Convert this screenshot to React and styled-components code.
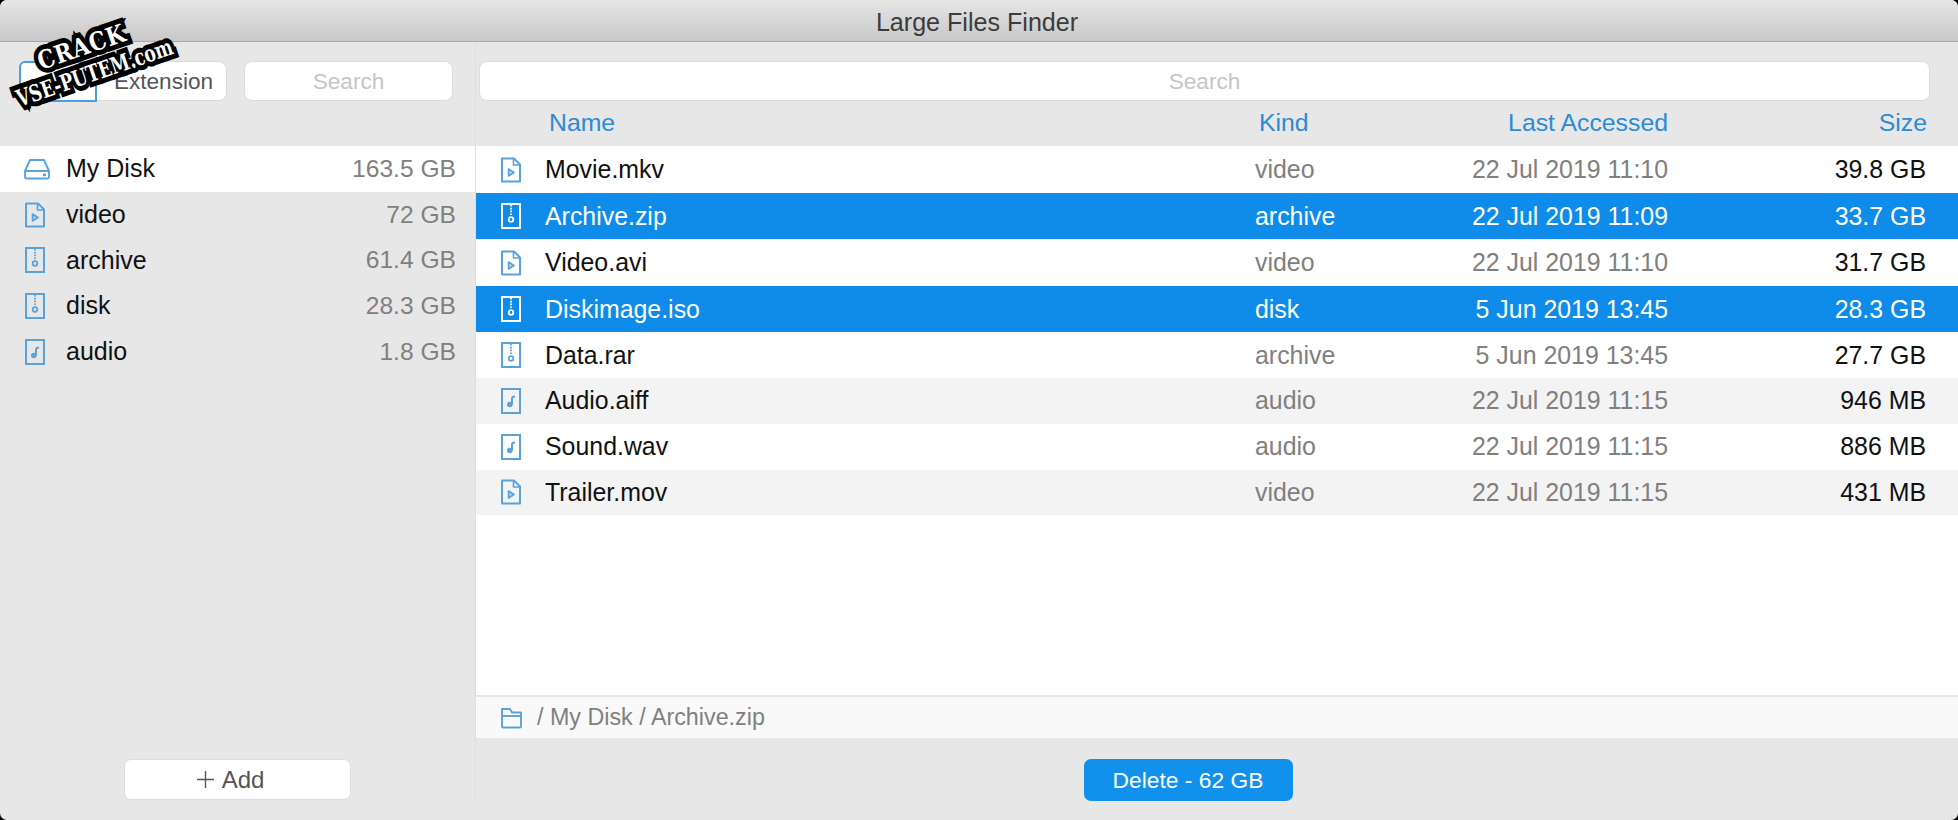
import React from "react";
import styled, { createGlobalStyle } from "styled-components";

const Global = createGlobalStyle`
  html, body { margin: 0; padding: 0; background: #000; }
  body { font-family: "Liberation Sans", Arial, sans-serif; }
  * { box-sizing: border-box; }
`;

const Win = styled.div`
  position: relative;
  width: 1958px;
  height: 820px;
  background: #e7e7e7;
  border-radius: 7px;
  overflow: hidden;
  display: flex;
  flex-direction: column;
`;
const TitleBar = styled.div`
  height: 42px;
  flex: none;
  background: linear-gradient(#e6e6e6, #c8c8c8);
  border-bottom: 1px solid #a9a9a9;
  color: #3c3c3c;
  font-size: 25.1px;
  display: flex;
  align-items: center;
  justify-content: center;
  padding: 3px 4px 0 0;
`;
const Body = styled.div`
  flex: 1;
  display: flex;
  min-height: 0;
`;
const Side = styled.aside`
  width: 476px;
  flex: none;
  border-right: 1px solid #dedede;
  display: flex;
  flex-direction: column;
  margin-bottom: 20px;
`;
const SideTop = styled.div`
  height: 104px;
  flex: none;
  padding: 19px 22px 0 19px;
  display: flex;
  align-items: flex-start;
`;
const Seg = styled.div`
  width: 78px;
  height: 41px;
  border: 2px solid #4a9fdc;
  border-radius: 6px 0 0 6px;
  background: #fff;
`;
const SegBtn = styled.div`
  width: 130px;
  height: 40px;
  background: #fff;
  border: 1px solid #dadada;
  border-left: none;
  border-radius: 0 8px 8px 0;
  color: #555;
  font-size: 22.6px;
  display: flex;
  align-items: center;
  justify-content: center;
  padding: 2px 0 0 4px;
`;
const SearchBox = styled.div`
  height: 40px;
  flex: ${(p) => (p.$wide ? 1 : "none")};
  width: ${(p) => (p.$wide ? "auto" : "209px")};
  margin-left: ${(p) => (p.$wide ? 0 : "17px")};
  background: #fff;
  border: 1px solid #dcdcdc;
  border-radius: 8px;
  color: #c6c6c6;
  font-size: 22.6px;
  display: flex;
  align-items: center;
  justify-content: center;
  padding-top: 2px;
`;
const SideRow = styled.div`
  height: 45.7px;
  flex: none;
  display: flex;
  align-items: center;
  padding: 0 19px 0 24px;
  background: ${(p) => (p.$active ? "#fff" : "transparent")};
`;
const SideIcon = styled.div`
  width: 42px;
  flex: none;
  display: flex;
  align-items: center;
`;
const SideName = styled.span`
  flex: 1;
  color: #111;
  font-size: 25px;
`;
const SideSize = styled.span`
  color: #808080;
  font-size: 24.6px;
`;
const SideFoot = styled.div`
  margin-top: auto;
  display: flex;
  padding-left: 124px;
`;
const AddBtn = styled.div`
  width: 227px;
  height: 41px;
  background: #fff;
  border: 1px solid #dcdcdc;
  border-radius: 7px;
  color: #555;
  font-size: 24px;
  display: flex;
  align-items: center;
  justify-content: center;
  gap: 8px;
  padding-right: 14px;
`;
const Main = styled.main`
  flex: 1;
  min-width: 0;
  display: flex;
  flex-direction: column;
`;
const MainTop = styled.div`
  flex: none;
  height: 60px;
  padding: 19px 28px 0 3px;
  display: flex;
  align-items: flex-start;
`;
const Grid = styled.div`
  display: grid;
  grid-template-columns: 45px 710px 160px 253px 1fr;
  padding: 0 31px 0 24px;
  align-items: center;
`;
const Head = styled(Grid)`
  height: 44px;
  flex: none;
  color: #2b8bd6;
  font-size: 24.8px;
  padding-bottom: 3px;
`;
const HeadCell = styled.span`
  text-align: ${(p) => (p.$right ? "right" : "left")};
  padding-left: ${(p) => (p.$right ? 0 : "4px")};
`;
const List = styled.div`
  flex: 1;
  background: #fff;
  min-height: 0;
`;
const Row = styled(Grid)`
  height: ${(p) => p.$h}px;
  font-size: 24.9px;
  background: ${(p) => (p.$sel ? "#0f8be9" : p.$alt ? "#f3f3f3" : "#fff")};
  color: ${(p) => (p.$sel ? "#fff" : "#111")};
`;
const RowIcon = styled.span`
  display: flex;
  align-items: center;
`;
const Muted = styled.span`
  color: ${(p) => (p.$sel ? "#fff" : "#808080")};
  text-align: ${(p) => (p.$right ? "right" : "left")};
`;
const Size = styled.span`
  text-align: right;
  padding-right: 1px;
`;
const PathBar = styled.div`
  height: 43px;
  flex: none;
  background: #f9f9f9;
  border-top: 2px solid #e6e6e6;
  display: flex;
  align-items: center;
  padding-left: 25px;
  gap: 15px;
  color: #808080;
  font-size: 23.3px;
`;
const Foot = styled.div`
  height: 82px;
  flex: none;
  display: flex;
  justify-content: flex-start;
  padding: 21px 0 0 607.5px;
`;
const DelBtn = styled.div`
  width: 209px;
  height: 42px;
  background: #1190ec;
  border-radius: 7px;
  color: #fff;
  font-size: 22.8px;
  display: flex;
  align-items: center;
  justify-content: center;
`;
const Stamp = styled.div`
  position: absolute;
  left: -3px;
  top: 20px;
  width: 190px;
  height: 90px;
  transform: rotate(-19deg);
  font-family: "DejaVu Serif", serif;
  font-weight: 700;
  color: #fff;
  line-height: 1;
  text-align: center;
  -webkit-text-stroke: 10px #000;
  paint-order: stroke fill;
`;
const StampTop = styled.div`
  font-size: 25px;
  margin: 12px 8px 4px 0;
  letter-spacing: 1px;
  transform: scaleX(0.86);
`;
const StampBottom = styled.div`
  font-size: 23px;
  white-space: nowrap;
  transform: scaleX(0.74);
  transform-origin: 50% 50%;
  margin-left: -50px;
  margin-right: -50px;
`;

const FileShape = ({ c, children }) => (
  <svg width="22" height="28" viewBox="0 0 22 28" fill="none" stroke={c} strokeWidth="2" strokeLinejoin="round">
    <path d="M2 2.5h12l6 6v17H2z" />
    <path d="M13.5 2.5v6.5H20" strokeWidth="1.6" />
    {children}
  </svg>
);
const Video = ({ c }) => (
  <FileShape c={c}>
    <path d="M8.5 13l5.5 3.5-5.5 3.5z" fill={c} fillOpacity=".45" strokeWidth="1.6" />
  </FileShape>
);
const Zip = ({ c }) => (
  <svg width="22" height="28" viewBox="0 0 22 28" fill="none" stroke={c} strokeWidth="2">
    <rect x="2" y="2" width="18" height="24" />
    <path d="M11 3v11" strokeDasharray="1.6 1.2" strokeWidth="1.8" />
    <circle cx="11" cy="17.5" r="2.3" strokeWidth="1.8" />
  </svg>
);
const Audio = ({ c }) => (
  <svg width="22" height="28" viewBox="0 0 22 28" fill="none" stroke={c} strokeWidth="2">
    <rect x="2" y="2" width="18" height="24" />
    <path d="M12 17.5v-6c0-1.4 1-1.9 3-1.9" strokeWidth="2" />
    <circle cx="9.8" cy="17.5" r="2.8" fill={c} stroke="none" />
  </svg>
);
const Disk = ({ c }) => (
  <svg width="26" height="22" viewBox="0 0 26 22" fill="none" stroke={c} strokeWidth="1.9" strokeLinejoin="round">
    <path d="M6 2h14l5 11H1z" />
    <rect x="1" y="13" width="24" height="7.5" rx="1.5" />
    <circle cx="20.5" cy="16.8" r=".7" fill={c} />
  </svg>
);
const Folder = ({ c }) => (
  <svg width="21" height="22" viewBox="0 0 21 22" fill="none" stroke={c} strokeWidth="1.9" strokeLinejoin="round">
    <path d="M1 19.5V2h8l2 3.5h9v14a1 1 0 0 1-1 1H2a1 1 0 0 1-1-1z" />
    <path d="M1 9h19" />
  </svg>
);

const BLUE = "#5aa3da";
const icons = { video: Video, archive: Zip, disk: Zip, audio: Audio };

const sideRows = [
  ["video", "72 GB"],
  ["archive", "61.4 GB"],
  ["disk", "28.3 GB"],
  ["audio", "1.8 GB"],
];
const files = [
  ["Movie.mkv", "video", "22 Jul 2019 11:10", "39.8 GB", "", 47],
  ["Archive.zip", "archive", "22 Jul 2019 11:09", "33.7 GB", "sel", 46],
  ["Video.avi", "video", "22 Jul 2019 11:10", "31.7 GB", "", 47],
  ["Diskimage.iso", "disk", "5 Jun 2019 13:45", "28.3 GB", "sel", 46],
  ["Data.rar", "archive", "5 Jun 2019 13:45", "27.7 GB", "", 46],
  ["Audio.aiff", "audio", "22 Jul 2019 11:15", "946 MB", "alt", 45.5],
  ["Sound.wav", "audio", "22 Jul 2019 11:15", "886 MB", "", 46],
  ["Trailer.mov", "video", "22 Jul 2019 11:15", "431 MB", "alt", 45.5],
];

export default function App() {
  return (
    <Win>
      <Global />
      <TitleBar>Large Files Finder</TitleBar>
      <Body>
        <Side>
          <SideTop>
            <Seg />
            <SegBtn>Extension</SegBtn>
            <SearchBox>Search</SearchBox>
          </SideTop>
          <SideRow $active>
            <SideIcon><Disk c={BLUE} /></SideIcon>
            <SideName>My Disk</SideName>
            <SideSize>163.5 GB</SideSize>
          </SideRow>
          {sideRows.map(([n, s]) => {
            const I = icons[n];
            return (
              <SideRow key={n}>
                <SideIcon><I c={BLUE} /></SideIcon>
                <SideName>{n}</SideName>
                <SideSize>{s}</SideSize>
              </SideRow>
            );
          })}
          <SideFoot>
            <AddBtn>
              <svg width="17" height="17" viewBox="0 0 17 17" stroke="#555" strokeWidth="1.4"><path d="M8.5 0v17M0 8.5h17" /></svg>
              Add
            </AddBtn>
          </SideFoot>
        </Side>
        <Main>
          <MainTop><SearchBox $wide>Search</SearchBox></MainTop>
          <Head>
            <span />
            <HeadCell>Name</HeadCell>
            <HeadCell>Kind</HeadCell>
            <HeadCell $right>Last Accessed</HeadCell>
            <HeadCell $right>Size</HeadCell>
          </Head>
          <List>
            {files.map(([n, k, d, s, f, h]) => {
              const I = icons[k];
              const sel = f === "sel";
              return (
                <Row key={n} $h={h} $sel={sel} $alt={f === "alt"}>
                  <RowIcon><I c={sel ? "#fff" : BLUE} /></RowIcon>
                  <span>{n}</span>
                  <Muted $sel={sel}>{k}</Muted>
                  <Muted $sel={sel} $right>{d}</Muted>
                  <Size>{s}</Size>
                </Row>
              );
            })}
          </List>
          <PathBar>
            <Folder c={BLUE} />
            <span>/ My Disk / Archive.zip</span>
          </PathBar>
          <Foot><DelBtn>Delete - 62 GB</DelBtn></Foot>
        </Main>
      </Body>
      <Stamp>
        <StampTop>CRACK</StampTop>
        <StampBottom>VSE-PUTEM.com</StampBottom>
      </Stamp>
    </Win>
  );
}
